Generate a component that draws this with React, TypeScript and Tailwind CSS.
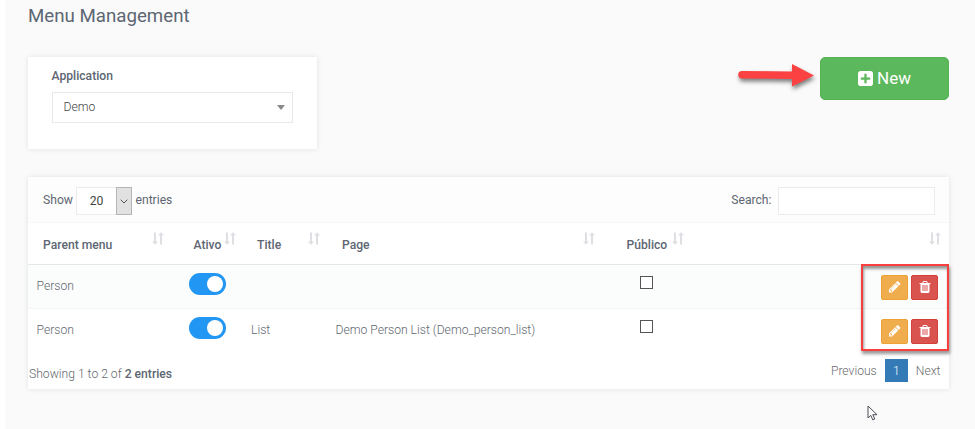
import React from 'react';

function PencilIcon() {
  return (
    <svg viewBox="0 0 1792 1792" className="block size-[13.5px] fill-white">
      <path d="M491 1536l91-91-235-235-91 91v107h128v128h107zm523-928q0-22-22-22-10 0-17 7l-542 542q-7 7-7 17 0 22 22 22 10 0 17-7l542-542q7-7 7-17zm-54-192l416 416-832 832h-416v-416zm683 96q0 53-37 90l-166 166-416-416 166-165q36-38 90-38 53 0 91 38l235 234q37 39 37 91z" />
    </svg>
  );
}

function TrashIcon() {
  return (
    <svg viewBox="0 0 1792 1792" className="block size-[14px] fill-white">
      <path d="M704 1376v-704q0-14-9-23t-23-9h-64q-14 0-23 9t-9 23v704q0 14 9 23t23 9h64q14 0 23-9t9-23zm256 0v-704q0-14-9-23t-23-9h-64q-14 0-23 9t-9 23v704q0 14 9 23t23 9h64q14 0 23-9t9-23zm256 0v-704q0-14-9-23t-23-9h-64q-14 0-23 9t-9 23v704q0 14 9 23t23 9h64q14 0 23-9t9-23zm-544-992h448l-48-117q-7-9-17-11h-317q-10 2-17 11zm928 32v64q0 14-9 23t-23 9h-96v948q0 83-47 143.5t-113 60.5h-832q-66 0-113-58.5t-47-141.5v-952h-96q-14 0-23-9t-9-23v-64q0-14 9-23t23-9h309l70-167q15-37 54-63t79-26h320q40 0 79 26t54 63l70 167h309q14 0 23 9t9 23z" />
    </svg>
  );
}

function SortIcon() {
  return (
    <svg viewBox="0 0 12 13" className="block h-[13px] w-3 shrink-0 fill-[#dddfe3]">
      <path d="M2 0.5h2v9h2l-3 3.2-3-3.2h2zM8 12.5h2v-9h2L9 0.3 6 3.5h2z" />
    </svg>
  );
}

function HeadCell({ label, className }: { label: string; className: string }) {
  return (
    <div className={'flex shrink-0 justify-between ' + className}>
      <span className="pt-[14px] leading-4">{label}</span>
      <span className="pt-[9px]">
        <SortIcon />
      </span>
    </div>
  );
}

function Toggle() {
  return (
    <div className="flex h-[22px] w-[37px] items-center justify-end rounded-full bg-[#2196f3] pr-[3px]">
      <div className="size-4 rounded-full bg-white" />
    </div>
  );
}

function Row({ title, page, className }: { title: string; page: string; className: string }) {
  return (
    <div className={'flex font-light text-[#62676f] ' + className}>
      <div className="w-[161px] pt-[13px] pl-[8.5px] leading-4">Person</div>
      <div className="w-[62px] pt-2">
        <Toggle />
      </div>
      <div className="w-[84.500px] pt-[13px] leading-4">{title}</div>
      <div className="w-[304.500px] pt-[13px] leading-4">{page}</div>
      <div className="flex-1 pt-[11px]">
        <div className="size-[13px] border border-[#555] bg-white" />
      </div>
      <div className="flex gap-[3px] pt-[9.500px] pr-[11px]">
        <div className="flex h-[25px] w-[27px] items-center justify-center rounded-[2px] border border-[#eea236] bg-[#f0ad4e]">
          <PencilIcon />
        </div>
        <div className="flex h-[25px] w-[27px] items-center justify-center rounded-[2px] border border-[#d43f3a] bg-[#d9534f]">
          <TrashIcon />
        </div>
      </div>
    </div>
  );
}

export default function App() {
  return (
    <div className="relative h-[429px] w-[975px] overflow-hidden bg-white pl-[5px] font-['Roboto',sans-serif] text-[12.15px] text-[#5d6672]">
      <div className="h-full bg-[#fafafa] pr-[26px] pl-[23px]">
        <h1 className="h-[57px] pt-[4px] text-[18.7px] leading-6">Menu Management</h1>

        <div className="flex h-[120px] items-start justify-between">
          <div className="h-[92px] w-[289px] bg-white px-[23.500px] pt-[11px] shadow-[0_0_5px_rgba(0,0,0,0.10)]">
            <div className="font-medium leading-4">Application</div>
            <div className="mt-2 flex h-[31px] w-[241px] items-center justify-between border border-[#e8e8e8] pr-[7px] pl-[11px] font-light text-[#444]">
              <span>Demo</span>
              <svg viewBox="0 0 8 5" className="h-[5px] w-[8px] fill-[#888]">
                <path d="M0 0h8L4 5z" />
              </svg>
            </div>
          </div>
          <div className="flex h-[43px] w-[129px] items-center justify-center gap-[4px] rounded-[5px] border border-[#55b255] bg-[#5cb85c] text-[17px] text-white">
            <svg viewBox="0 0 16 16" className="size-[15px]">
              <rect width="16" height="16" rx="3" fill="white" />
              <path d="M8 3v10M3 8h10" stroke="#5cb85c" strokeWidth="2.4" />
            </svg>
            <span>New</span>
          </div>
        </div>

        <div className="h-[212px] bg-white shadow-[0_0_5px_rgba(0,0,0,0.10)]">
          <div className="flex h-[46px] items-start border-b border-[#f7f7f7] bg-[#fdfdfd] pt-[10px] pr-[15px] pl-[15px]">
            <span className="w-[33px] leading-[27px]">Show</span>
            <div className="flex h-7 w-[56px] border border-[#ececec] bg-white text-[#444]">
              <span className="w-[39px] text-center leading-[27px]">20</span>
              <span className="-my-px -mr-px flex w-4 items-center justify-center border border-[#b5b5b5] bg-[#e1e1e1]">
                <svg viewBox="0 0 8 5" className="h-[5px] w-2 fill-none stroke-[#555]">
                  <path d="M.7.7L4 4 7.3.7" />
                </svg>
              </span>
            </div>
            <span className="pl-[3.500px] leading-[27px]">entries</span>
            <span className="ml-auto pr-[6px] leading-[27px]">Search:</span>
            <div className="-mr-[0.500px] h-7 w-[157px] border border-[#ececec] bg-white" />
          </div>

          <div className="flex h-[42px] border-b border-[#e6e6e6] pl-[15px] font-medium">
            <HeadCell label="Parent menu" className="w-[121px]" />
            <HeadCell label="Ativo" className="ml-[29.500px] w-[42.500px]" />
            <HeadCell label="Title" className="ml-[21px] w-[63px]" />
            <HeadCell label="Page" className="ml-[22px] w-[253px]" />
            <HeadCell label="Público" className="ml-[31.500px] w-[57.500px]" />
            <HeadCell label="" className="mr-2 ml-auto w-3" />
          </div>

          <Row title="" page="" className="h-11 border-b border-[#f4f4f4] bg-[#fbfdfc]" />
          <Row title="List" page="Demo Person List (Demo_person_list)" className="h-[43px]" />

          <div className="flex pt-[6px] pl-px font-light text-[#62676f]">
            <span className="pt-[8px] leading-4">
              Showing 1 to 2 of <b className="font-medium text-[#5d6672]">2 entries</b>
            </span>
            <div className="ml-auto flex h-[23px] pt-px leading-6 text-[#6c6c6c]">
              <span className="pr-[8px]">Previous</span>
              <span className="h-[23px] w-[23px] bg-[#337ab7] text-center text-white">1</span>
              <span className="pr-[8.500px] pl-[8px]">Next</span>
            </div>
          </div>
        </div>
      </div>

      <svg viewBox="0 0 90 40" className="absolute top-[56px] left-[730px] h-[40px] w-[90px] overflow-visible drop-shadow-[1px_3px_2px_rgba(0,0,0,0.5)]">
        <path d="M12 15L62 15.500V8L84 19.500 62 30.500V23L12 22.500A3.750 3.750 0 0 1 12 15z" fill="#fb4141" />
      </svg>
      <div className="absolute top-[264px] left-[861px] h-[87px] w-[88px] border-2 border-[#f93e3e] shadow-[1px_3px_3px_rgba(0,0,0,0.4),inset_1px_3px_3px_rgba(0,0,0,0.4)]" />
      <svg viewBox="0 0 11 16" className="absolute top-[405px] left-[867px] h-4 w-[11px]">
        <path d="M1 1v12l2.800-2.600 2 4.500 2-.9-2-4.300H10z" fill="white" stroke="#4a4a55" strokeWidth="1" />
      </svg>
    </div>
  );
}
